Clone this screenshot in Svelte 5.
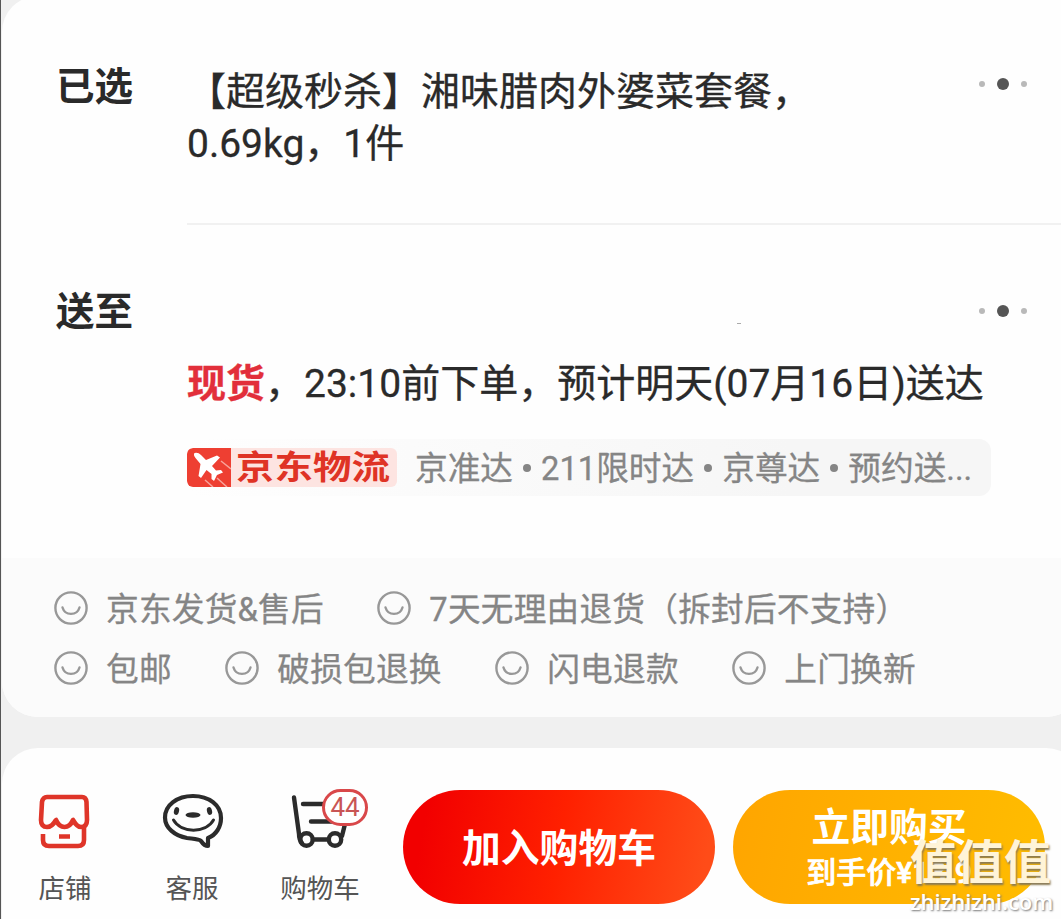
<script lang="ts">
  const guarantees = [
    ["京东发货&售后", "7天无理由退货（拆封后不支持）"],
    ["包邮", "破损包退换", "闪电退款", "上门换新"],
  ];
  const services = ["京准达", "211限时达", "京尊达", "预约送..."];

  let cartCount = $state(44);
</script>

{#snippet more()}
  <button class="more" aria-label="更多"><i></i><i class="big"></i><i></i></button>
{/snippet}

<div class="page">
  <main class="card">
    <section class="row selected">
      <h2>已选</h2>
      <div class="content">
        <p class="product">【超级秒杀】湘味腊肉外婆菜套餐，<br />0.69kg，1件</p>
      </div>
      {@render more()}
    </section>

    <section class="row delivery">
      <h2>送至</h2>
      <div class="content">
        <div class="address"><span></span></div>
        <p class="eta"><strong>现货</strong>，23:10前下单，预计明天(07月16日)送达</p>
        <div class="logistics">
          <div class="logo">
            <svg viewBox="0 0 44 39" width="44" height="39">
              <path d="M6 0H44V39H6Q0 39 0 33V6Q0 0 6 0Z" fill="#ee3f32" />
              <path d="M34 13l10 8M18 32l8 7M30 30l10 9" stroke="#f8a39b" stroke-width="1.5" />
              <path
                d="M7.500 5Q11 4 14 7L19 12L30 7.500L33 9.500L25 18L29 22.500L34 22L36 24.500L30 27L27 33L24.500 31L24.500 26L19.500 22L14 30L11.500 28L13.500 16L8.500 10Q6 7 7.500 5Z"
                fill="#fff"
              />
            </svg>
            <b>京东物流</b>
          </div>
          <div class="services">
            {#each services as service, i}
              {#if i > 0}<i></i>{/if}
              <span>{service}</span>
            {/each}
          </div>
        </div>
      </div>
      {@render more()}
    </section>

    <section class="guarantees">
      {#each guarantees as line}
        <div class="line">
          {#each line as item}
            <div class="guarantee">
              <svg viewBox="0 0 34 34" width="34" height="34">
                <circle cx="17" cy="17" r="15.6" />
                <path d="M8.500 16.500C11 25 23 25 25.500 16.500" />
              </svg>
              <span>{item}</span>
            </div>
          {/each}
        </div>
      {/each}
    </section>
  </main>

  <footer class="card bar">
    <nav>
      <a href="#shop">
        <svg viewBox="0 0 56 60" width="56" height="60" fill="none" stroke="#df3529" stroke-width="4.6" stroke-linejoin="round">
          <path
            d="M10 7H45Q49 7 49.500 12L50 30Q50 37 44 37Q40 37 36 30Q33 37 27.500 37Q22 37 19 30Q15 37 10 37Q4 37 4 30L5 12Q6 7 10 7Z"
          />
          <path d="M6 44V50Q6 56 12 56H41Q47 56 47 50V37" />
          <path d="M22 46.500H33" />
        </svg>
        <span>店铺</span>
      </a>
      <a href="#service">
        <svg viewBox="0 0 64 60" width="64" height="60" fill="none" stroke="#2b2b2b" stroke-width="4.2" stroke-linejoin="round">
          <path
            d="M33 6C17 6 5 15 5 27.500C5 38 15 46 27 48C35 49 39 49 41 51C43 54 45 56 48 56V48C56 45 61 37 61 28C61 15 49 6 33 6Z"
          />
          <path d="M13.500 30C21 43.500 46 43.500 53.500 30" stroke-width="3" stroke-linecap="round" />
          <g fill="#2b2b2b" stroke="none">
            <ellipse cx="16.500" cy="21" rx="2.500" ry="4" transform="rotate(15 16.500 21)" />
            <ellipse cx="49.500" cy="21" rx="2.500" ry="4" transform="rotate(-15 49.500 21)" />
            <ellipse cx="33" cy="25" rx="7.500" ry="2.800" />
          </g>
        </svg>
        <span>客服</span>
      </a>
      <a href="#cart" class="cart">
        <svg viewBox="0 0 64 60" width="64" height="60" fill="none" stroke="#2b2b2b" stroke-width="4.400" stroke-linecap="round">
          <path d="M6 7.500L11 44C11 48 12 51 14 53M15 14H42M23 31.500H44M57 34L54 46" />
          <circle cx="18.500" cy="49.500" r="6.200" />
          <circle cx="47" cy="49.500" r="6.200" />
          <path d="M25 49.500H40" />
        </svg>
        <em>{cartCount}</em>
        <span>购物车</span>
      </a>
    </nav>
    <button class="cta add">加入购物车</button>
    <button class="cta buy">
      <span>立即购买</span>
      <small>到手价¥13.9</small>
    </button>
  </footer>

  <div class="watermark">
    <b>值值值</b>
    <span>zhizhizhi.com</span>
  </div>
</div>

<style>
  :global(body) {
    margin: 0;
    background: #f0f0f0;
  }
  .page {
    position: relative;
    box-sizing: border-box;
    width: 1061px;
    height: 919px;
    overflow: hidden;
    border-left: 1px solid #555;
    background: #f0f0f0;
    color: #2a2a2a;
    font-family: Roboto, "Noto Sans CJK SC", sans-serif;
  }
  h2,
  p {
    margin: 0;
  }
  button {
    padding: 0;
    border: none;
    background: none;
    font-family: inherit;
  }
  svg {
    display: block;
  }
  .card {
    width: 1080px;
    margin-left: 1px;
    border-radius: 36px;
    background: #fefefe;
    overflow: hidden;
  }
  main.card {
    height: 721px;
    margin-top: -4px;
  }
  .row {
    display: flex;
    box-sizing: border-box;
    width: 1059px;
    padding-left: 54px;
  }
  .row h2 {
    width: 131px;
    font-size: 38.5px;
    line-height: 52px;
    font-weight: 700;
    flex: none;
  }
  .content {
    flex: 1;
  }
  .selected {
    height: 229px;
  }
  .selected h2 {
    padding-top: 65px;
  }
  .selected .content {
    padding-top: 70px;
    border-bottom: 2px solid #f1f1f1;
  }
  .product,
  .eta {
    width: 860px;
    font-size: 39px;
    line-height: 52px;
    -webkit-text-stroke: 0.3px;
    white-space: nowrap;
  }
  .more {
    display: flex;
    align-items: center;
    gap: 12px;
    width: 50px;
    height: 14px;
    margin: 81px 32px 0 -82px;
  }
  .more i {
    width: 6px;
    height: 6px;
    border-radius: 50%;
    background: #b9b9b9;
  }
  .more .big {
    width: 12px;
    height: 12px;
    background: #555;
  }
  .delivery {
    height: 333px;
  }
  .delivery h2 {
    padding-top: 61px;
  }
  .address {
    display: flex;
    height: 133px;
  }
  .address span {
    width: 4px;
    height: 1px;
    margin: 98px 0 0 550px;
    background: #aaa;
  }
  .eta strong {
    color: #e22f3b;
    font-weight: 700;
  }
  .logistics {
    display: flex;
    align-items: center;
    width: 804px;
    height: 57px;
    margin-top: 29px;
    border-radius: 12px;
    background: linear-gradient(90deg, #fefefe, #f6f6f6 75%);
  }
  .logo {
    display: flex;
    align-items: center;
    width: 210px;
    height: 39px;
    border-radius: 6px;
    background: #fde4e1;
    overflow: hidden;
  }
  .logo b {
    margin-left: 5px;
    color: #df3325;
    font-size: 38.5px;
    line-height: 39px;
    transform: scaleY(0.86);
  }
  .services {
    display: flex;
    align-items: center;
    gap: 10px;
    margin-left: 18px;
    color: #858585;
    font-size: 32.7px;
    line-height: 56px;
    -webkit-text-stroke: 0.3px;
    white-space: nowrap;
  }
  .services span {
    padding-top: 3px;
  }
  .services i {
    width: 8px;
    height: 8px;
    border-radius: 50%;
    background: #858585;
  }
  .delivery .more {
    margin-top: 79px;
  }
  .guarantees {
    display: flex;
    flex-direction: column;
    gap: 12px;
    height: 160px;
    padding: 26px 0 0 52px;
    box-sizing: border-box;
    background: #fbfbfb;
  }
  .line {
    display: flex;
    gap: 53.5px;
  }
  .guarantee {
    display: flex;
    align-items: center;
    gap: 18px;
    height: 48px;
    color: #858585;
    font-size: 32.7px;
    line-height: 44px;
    letter-spacing: 0.2px;
    -webkit-text-stroke: 0.3px;
    white-space: nowrap;
  }
  .guarantee span {
    padding-top: 4px;
  }
  .guarantee svg {
    fill: none;
    stroke: #989898;
    stroke-width: 2.4;
    stroke-linecap: round;
  }
  .bar {
    display: flex;
    height: 210px;
    margin-top: 31px;
  }
  nav {
    display: flex;
    width: 401px;
    flex: none;
  }
  nav a {
    display: flex;
    flex-direction: column;
    align-items: center;
    width: 128px;
    padding-top: 42px;
    color: #555;
    text-decoration: none;
    font-size: 26.5px;
    line-height: 36px;
  }
  nav a:first-child {
    width: 126px;
  }
  nav span {
    margin-top: 21px;
  }
  .cart {
    position: relative;
  }
  .cart em {
    position: absolute;
    left: 66px;
    top: 41px;
    box-sizing: border-box;
    width: 46px;
    height: 37px;
    border: 3px solid #d9484a;
    border-radius: 19px;
    background: #fff;
    color: #c95555;
    font-size: 26px;
    line-height: 31px;
    font-style: normal;
    text-align: center;
  }
  .cta {
    display: flex;
    flex-direction: column;
    align-items: center;
    justify-content: center;
    box-sizing: border-box;
    width: 312px;
    height: 114px;
    margin: 42px 18px 0 0;
    padding-top: 3px;
    border-radius: 57px;
    color: #fff;
    font-size: 38.8px;
    line-height: 47px;
    font-weight: 700;
    flex: none;
  }
  .add {
    background: linear-gradient(100deg, #f20000 8%, #ff2000 50%, #ff4c18 95%);
  }
  .buy {
    background: linear-gradient(100deg, #ffa500, #ffbd00);
  }
  .buy small {
    padding-top: 1px;
    font-size: 30px;
    line-height: 41px;
    font-weight: 500;
    -webkit-text-stroke: 0.7px;
  }
  /* site mark laid over the buy button */
  .watermark {
    position: absolute;
    left: 909px;
    top: 835px;
    color: #fff;
    white-space: nowrap;
  }
  .watermark b,
  .watermark span {
    display: block;
  }
  .watermark b {
    color: #fff4d8;
    font-size: 47px;
    line-height: 56px;
    text-shadow: 1px 2px 2px #8a7a55;
  }
  .watermark span {
    font-family: "Open Sans", sans-serif;
    font-size: 22px;
    line-height: 20px;
    font-weight: 600;
    text-shadow: 1px 1px 2px #777;
  }
</style>
